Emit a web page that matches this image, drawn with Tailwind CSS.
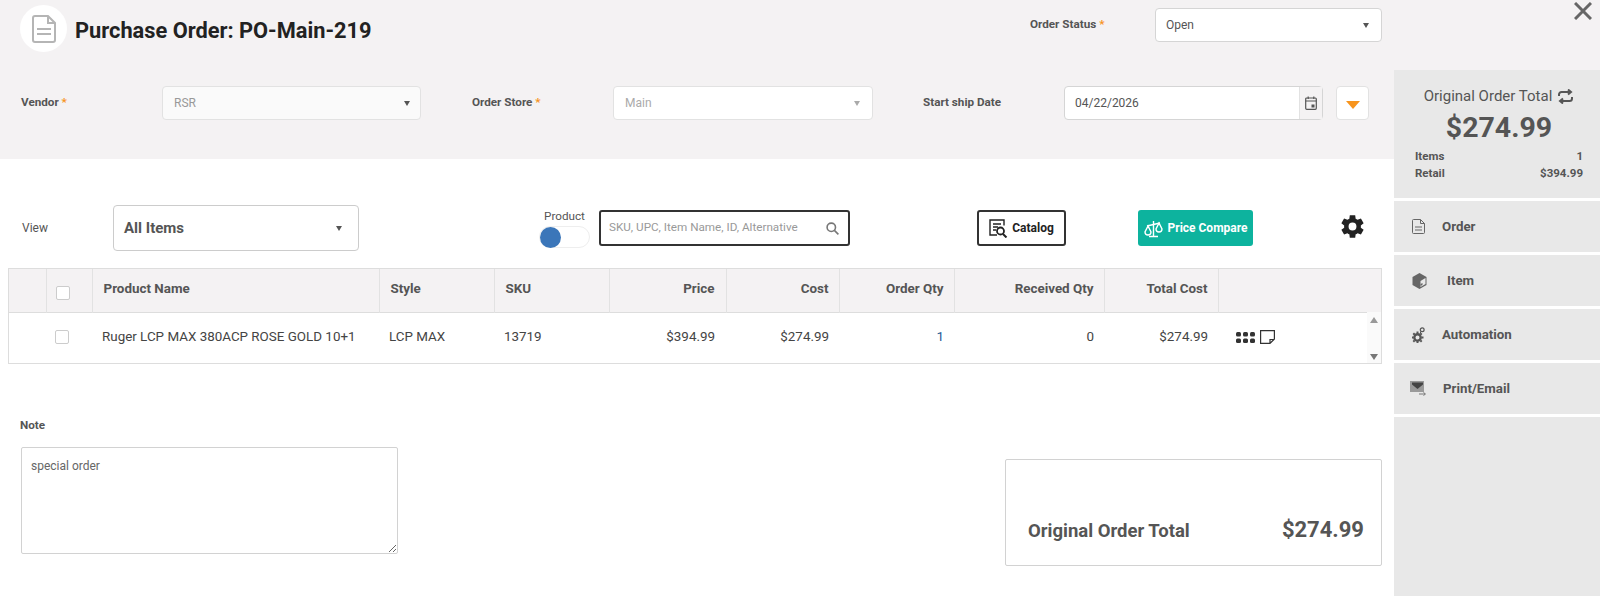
<!DOCTYPE html>
<html lang="en">
<head>
  <meta charset="UTF-8">
  <title>Purchase Order</title>
  <script src="https://cdn.jsdelivr.net/npm/@tailwindcss/browser@4"></script>
</head>
<body class="bg-white overflow-hidden font-['Roboto',sans-serif] text-[#555]">
<div class="flex w-[1600px] h-[596px] overflow-hidden">

  <!-- left side -->
  <main class="w-[1394px] shrink-0">
    <header class="h-[159px] bg-[#f4f2f3]">
      <div class="flex h-[70px]">
        <div class="ml-5 mt-[5px] w-[47px] h-[47px] rounded-full bg-white flex items-center justify-center">
          <svg class="w-[24px] h-[28px]" viewBox="0 0 24 28" fill="none" stroke="#b5b5b5" stroke-width="2"><path d="M3 1h13l7 7v17a2 2 0 0 1-2 2H3a2 2 0 0 1-2-2V3a2 2 0 0 1 2-2z"/><path d="M16 1v7h7M5 14h14M5 19h14"/></svg>
        </div>
        <h1 class="ml-2 mt-[17px] text-[21.8px] leading-[27px] font-bold text-[#222] h-fit">Purchase Order: PO-Main-219</h1>
        <div class="ml-auto mr-3 mt-2 flex">
          <label class="w-[125px] mt-[8px] text-[11.7px] font-bold leading-4">Order Status <span class="text-[#f7941d]">*</span></label>
          <div class="w-[227px] h-[34px] bg-white border border-[#d5d5d5] rounded flex items-center justify-between pl-[10px] pr-[12px] text-xs">Open<span class="w-0 h-0 border-x-[3.5px] border-x-transparent border-t-[5px] border-t-[#555]"></span></div>
        </div>
      </div>
      <div class="flex mt-4 items-center h-[34px]">
        <label class="ml-[21px] w-[141px] text-[11.7px] font-bold">Vendor <span class="text-[#f7941d]">*</span></label>
        <div class="w-[259px] h-[34px] bg-[#fafafa] border border-[#e2e2e2] rounded flex items-center justify-between pl-[11px] pr-[10px] text-xs text-[#999]">RSR<span class="w-0 h-0 border-x-[3.5px] border-x-transparent border-t-[5px] border-t-[#555]"></span></div>
        <label class="ml-[51px] w-[141px] text-[11.7px] font-bold">Order Store <span class="text-[#f7941d]">*</span></label>
        <div class="w-[260px] h-[34px] bg-white border border-[#e2e2e2] rounded flex items-center justify-between pl-[11px] pr-[12px] text-xs text-[#aaa]">Main<span class="w-0 h-0 border-x-[3.5px] border-x-transparent border-t-[5px] border-t-[#aaa]"></span></div>
        <label class="ml-[50px] w-[141px] text-[11.7px] font-bold">Start ship Date</label>
        <div class="w-[259px] h-[34px] bg-white border border-[#d5d5d5] rounded flex items-center text-xs">
          <span class="pl-[10px] flex-1">04/22/2026</span>
          <span class="w-[23px] h-full bg-[#f4f2f3] border-l border-[#e2e2e2] flex items-center justify-center">
            <svg class="w-3 h-[14px]" viewBox="0 0 12 14" fill="none" stroke="#555" stroke-width="1.2"><rect x="0.7" y="2" width="10.6" height="11.3" rx="1"/><path d="M.7 5h10.6M3.2 0.4v2.6M8.8 0.4v2.6"/><rect x="6.5" y="8.5" width="3" height="3" fill="#555" stroke="none"/></svg>
          </span>
        </div>
        <div class="ml-[13px] w-[33px] h-[34px] bg-white border border-[#e2e2e2] rounded flex items-center justify-center pt-[3px]">
          <span class="w-0 h-0 border-x-[7px] border-x-transparent border-t-[8px] border-t-[#f7941d]"></span>
        </div>
      </div>
    </header>

    <div class="flex mt-[46px] h-[46px] items-center">
      <span class="ml-[22px] w-[91px] text-xs">View</span>
      <div class="w-[246px] h-[46px] border border-[#ccc] rounded flex items-center justify-between pl-[10px] pr-[16px] text-[15px] font-bold">All Items<span class="w-0 h-0 border-x-[3.5px] border-x-transparent border-t-[5px] border-t-[#555]"></span></div>
      <div class="ml-[180px] w-[51px] flex flex-col items-center pt-[1px]">
        <span class="text-[11.7px] leading-[14px]">Product</span>
        <div class="mt-[3px] w-[51px] h-[22px] border border-[#eee] rounded-full bg-white">
          <div class="w-[21px] h-[21px] rounded-full bg-[#3b76b9]"></div>
        </div>
      </div>
      <div class="ml-[9px] w-[251px] h-9 border-2 border-[#333] rounded-[3px] flex items-center justify-between pl-2 pr-[9px] text-[11.7px] text-[#999]">
        SKU, UPC, Item Name, ID, Alternative
        <svg class="w-[13px] h-[13px]" viewBox="0 0 13 13" fill="none" stroke="#777" stroke-width="1.6"><circle cx="5.3" cy="5.3" r="4.2"/><path d="M8.4 8.4l4 4"/></svg>
      </div>
      <button class="ml-[127px] w-[89px] h-9 border-2 border-[#333] rounded-[3px] flex items-center justify-center gap-1 text-xs font-bold text-[#222]">
        <svg class="w-[19px] h-[19px]" viewBox="0 0 19 19" fill="none" stroke="#222" stroke-width="1.4"><path d="M15 6.500V1H1v15h7"/><path d="M4 5h8M4 8h5M4 11h3"/><circle cx="11.500" cy="12" r="3.500" stroke-width="1.800"/><path d="M14 15l3.500 3.500" stroke-width="2"/></svg>
        Catalog
      </button>
      <button class="ml-[72px] w-[115px] h-9 bg-[#0db39e] rounded-[3px] flex items-center justify-center gap-[5px] text-xs font-bold text-white">
        <svg class="w-[19px] h-[19px]" viewBox="0 0 19 19" fill="none" stroke="#fff" stroke-width="1.4"><path d="M3 7l13-3M9.500 2v15M5 17.500h9"/><path d="M4 7l-3 6a3 3 0 0 0 6 0zM15 4l-3 6a3 3 0 0 0 6 0z"/></svg>
        Price Compare
      </button>
      <svg class="ml-[86px] mb-[3px] w-[27px] h-[27px]" viewBox="0 0 24 24" fill="#222"><path d="M19.400 13a7.600 7.600 0 0 0 0-2l2.500-1.900-2.400-4.200-3 1.200a7.600 7.600 0 0 0-1.700-1L14.400 1.900H9.600l-.4 3.200a7.600 7.600 0 0 0-1.700 1l-3-1.200L2.100 9.100 4.600 11a7.600 7.600 0 0 0 0 2l-2.500 1.900 2.400 4.200 3-1.200a7.600 7.600 0 0 0 1.700 1l.4 3.200h4.800l.4-3.200a7.600 7.600 0 0 0 1.700-1l3 1.200 2.400-4.200zM12 15.500a3.500 3.500 0 1 1 0-7 3.500 3.500 0 0 1 0 7z"/></svg>
    </div>

    <div class="ml-2 mt-[17px] w-[1374px] h-[96px] border border-[#ddd] relative">
      <table class="w-full table-fixed text-[13.4px] border-collapse">
        <colgroup>
          <col class="w-[37px]"><col class="w-[46px]"><col class="w-[287px]"><col class="w-[115px]"><col class="w-[115px]"><col class="w-[117px]"><col class="w-[113px]"><col class="w-[115px]"><col class="w-[150px]"><col class="w-[114px]"><col>
        </colgroup>
        <thead>
          <tr class="h-[43px] bg-[#f4f2f3] border-b border-[#ddd] font-bold">
            <th class="border-r border-[#e2e2e2]"></th>
            <th class="border-r border-[#e2e2e2] pt-[6px]"><span class="block ml-[9px] w-[14px] h-[14px] bg-white border border-[#ccc] rounded-[2px]"></span></th>
            <th class="border-r border-[#e2e2e2] text-left pl-[11px] pb-[2px]">Product Name</th>
            <th class="border-r border-[#e2e2e2] text-left pl-[11px] pb-[2px]">Style</th>
            <th class="border-r border-[#e2e2e2] text-left pl-[11px] pb-[2px]">SKU</th>
            <th class="border-r border-[#e2e2e2] text-right pr-[11px] pb-[2px]">Price</th>
            <th class="border-r border-[#e2e2e2] text-right pr-[10px] pb-[2px]">Cost</th>
            <th class="border-r border-[#e2e2e2] text-right pr-[10px] pb-[2px]">Order Qty</th>
            <th class="border-r border-[#e2e2e2] text-right pr-[10px] pb-[2px]">Received Qty</th>
            <th class="border-r border-[#e2e2e2] text-right pr-[10px] pb-[2px]">Total Cost</th>
            <th></th>
          </tr>
        </thead>
        <tbody>
          <tr class="h-[50px]">
            <td></td>
            <td><span class="block ml-[9px] w-[14px] h-[14px] bg-white border border-[#ccc] rounded-[2px]"></span></td>
            <td class="pl-[10px] text-[#444]">Ruger LCP MAX 380ACP ROSE GOLD 10+1</td>
            <td class="pl-[10px] text-[#444]">LCP MAX</td>
            <td class="pl-[10px] text-[#444]">13719</td>
            <td class="text-right pr-[11px] text-[#444]">$394.99</td>
            <td class="text-right pr-[10px] text-[#444]">$274.99</td>
            <td class="text-right pr-[10px] text-[#1f5a96]">1</td>
            <td class="text-right pr-[10px] text-[#444]">0</td>
            <td class="text-right pr-[10px] text-[#444]">$274.99</td>
            <td class="pl-[18px]">
              <div class="flex items-center gap-[5px]">
                <svg class="w-[19px] h-[11px]" viewBox="0 0 19 11" fill="#333"><rect x="0" y="0" width="5" height="4.500" rx="1.500"/><rect x="7" y="0" width="5" height="4.500" rx="1.500"/><rect x="14" y="0" width="5" height="4.500" rx="1.500"/><rect x="0" y="6.500" width="5" height="4.500" rx="1.500"/><rect x="7" y="6.500" width="5" height="4.500" rx="1.500"/><rect x="14" y="6.500" width="5" height="4.500" rx="1.500"/></svg>
                <svg class="w-[15px] h-[14px]" viewBox="0 0 15 14" fill="none" stroke="#333" stroke-width="1.200"><path d="M14.400 9V.6H.6v12.800H10zM14.400 9l-4.400 4.400V9.500h4"/></svg>
              </div>
            </td>
          </tr>
        </tbody>
      </table>
      <!-- scrollbar arrows over the row -->
      <div class="absolute right-0 top-[43px] bottom-0 w-[14px] bg-[#fafafa] flex flex-col items-center justify-between pt-[5px] pb-[3px]">
        <span class="w-0 h-0 border-x-[4px] border-x-transparent border-b-[6px] border-b-[#999]"></span>
        <span class="w-0 h-0 border-x-[4px] border-x-transparent border-t-[6px] border-t-[#777]"></span>
      </div>
    </div>

    <div class="flex mt-[54px]">
      <div class="ml-5 w-[378px]">
        <p class="text-[11.7px] font-bold leading-[14px]">Note</p>
        <textarea class="block mt-[15px] ml-[1px] w-[377px] h-[107px] border-[1.5px] border-[#d2d2d2] rounded-[2px] px-[9px] pt-[10px] text-xs text-[#666]">special order</textarea>
      </div>
      <div class="ml-[607px] mt-[41px] w-[377px] h-[107px] border-[1.5px] border-[#d2d2d2] rounded-[2px] flex items-end justify-between pl-[22px] pr-[17px] pb-[22px] font-bold">
        <span class="text-[18.500px] leading-6">Original Order Total</span>
        <span class="text-[22px] leading-7 -mb-px">$274.99</span>
      </div>
    </div>
  </main>

  <!-- right side -->
  <aside class="w-[206px] shrink-0 flex flex-col">
    <div class="h-[70px] bg-[#f4f2f3] flex justify-end">
      <svg class="mr-2 w-[18px] h-[18px] mt-[2px]" viewBox="0 0 18 18" stroke="#666" stroke-width="3"><path d="M1 1l16 16M17 1L1 17"/></svg>
    </div>
    <div class="flex-1 bg-[#e8e8e8]">
      <div class="h-[128px] pl-[21px] pr-[17px] pt-[17px]">
        <p class="flex items-center justify-center gap-[5px] text-[15px] leading-[18px]">Original Order Total
          <svg class="w-[17px] h-[15px]" viewBox="0 0 17 15" fill="none" stroke="#555" stroke-width="2"><path d="M2 7V5.500A2.500 2.500 0 0 1 4.500 3H13M11 .5L14 3l-3 2.500M15 8v1.500A2.500 2.500 0 0 1 12.500 12H4M6 9.500L3 12l3 2.500"/></svg>
        </p>
        <p class="mt-[5px] text-center text-[28.500px] leading-9 font-bold">$274.99</p>
        <div class="mt-[2px] flex justify-between text-[11.500px] leading-[17px] font-bold"><span>Items</span><span>1</span></div>
        <div class="flex justify-between text-[11.500px] leading-[17px] font-bold"><span>Retail</span><span>$394.99</span></div>
      </div>
      <nav class="text-[13.300px] font-bold border-t-[3px] border-white">
        <div class="h-[54px] border-b-[3px] border-white flex items-center pl-[18px]">
          <svg class="w-[13px] h-[15px]" viewBox="0 0 13 15" fill="none" stroke="#666"><path d="M1.500.5h7l4 4v9a1 1 0 0 1-1 1h-10a1 1 0 0 1-1-1v-12a1 1 0 0 1 1-1zM8.500.5v4h4M3 8h7M3 11h7"/></svg>
          <span class="ml-[17px]">Order</span>
        </div>
        <div class="h-[54px] border-b-[3px] border-white flex items-center pl-[18px]">
          <svg class="w-[15px] h-[16px]" viewBox="0 0 15 16" fill="#666"><path d="M7.500 0l7 4v8l-7 4-7-4V4z"/><path d="M8.500 8l5-3v6l-5 3z" fill="#e8e8e8"/><path d="M8.500 11l2-1v2l-2 1z" fill="#666"/></svg>
          <span class="ml-[20px]">Item</span>
        </div>
        <div class="h-[54px] border-b-[3px] border-white flex items-center pl-[18px]">
          <svg class="w-[13px] h-[16px]" viewBox="0 0 13 16"><circle cx="5.500" cy="10.500" r="3.200" fill="none" stroke="#555" stroke-width="2.400"/><path d="M5.500 4.500v12M-.5 10.500h12M1.300 6.300l8.400 8.400M9.700 6.300l-8.400 8.400" stroke="#555" stroke-width="2" stroke-dasharray="2 8"/><circle cx="10.200" cy="2.800" r="1.900" fill="none" stroke="#555" stroke-width="1.200"/><path d="M9 4.500L8 6.500" stroke="#555"/></svg>
          <span class="ml-[17px]">Automation</span>
        </div>
        <div class="h-[54px] border-b-[3px] border-white flex items-center pl-[16px]">
          <svg class="w-4 h-[15px]" viewBox="0 0 16 15"><rect x="0" y="0" width="14" height="11" fill="#9a9a9a"/><path d="M2 1.500h11v2L7.500 8 2 3.500z" fill="#444"/><path d="M9 13h6M13.500 11.500L15.500 13l-2 1.500" fill="none" stroke="#777"/></svg>
          <span class="ml-[17px]">Print/Email</span>
        </div>
      </nav>
    </div>
  </aside>
</div>
</body>
</html>
